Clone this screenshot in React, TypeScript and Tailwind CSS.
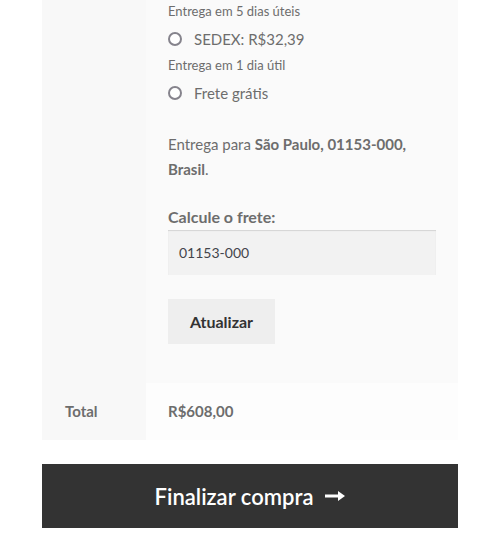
const font = { fontFamily: '"Lato", "Liberation Sans", sans-serif' };

function Radio({ label }: { label: string }) {
  return (
    <label className="flex items-center h-[24px] mt-2">
      <span className="w-[14px] h-[14px] rounded-full border-2 border-[#85838c] bg-white shrink-0" />
      <span className="ml-[12px] text-[15px] leading-[24px]">{label}</span>
    </label>
  );
}

function Method({ note, label, first }: { note: string; label: string; first?: boolean }) {
  return (
    <li className={first ? 'pt-[3px]' : 'mt-[6px]'}>
      <p className="text-[13px] leading-[16px]">{note}</p>
      <Radio label={label} />
    </li>
  );
}

export default function App() {
  return (
    <div className="w-[498px] h-[547px] bg-white pl-[42px] pr-[40px] text-[#6d6d6d] overflow-hidden" style={font}>
      <div className="flex">
        <div className="w-[104px] bg-[#f8f8f8]" />
        <div className="flex-1 bg-[#fafafa] px-[22px] pb-[39px]">
          <ul>
            <Method first note="Entrega em 5 dias úteis" label="SEDEX: R$32,39" />
            <Method note="Entrega em 1 dia útil" label="Frete grátis" />
          </ul>
          <p className="mt-[27px] text-[15px] leading-[25px]">
            Entrega para <strong className="font-bold">São Paulo, 01153-000, Brasil</strong>.
          </p>
          <p className="mt-[22px] mb-[1px] text-[16px] leading-[25px] font-bold">Calcule o frete:</p>
          <div className="h-[45px] bg-[#f2f2f2] shadow-[inset_0_1px_1px_rgba(0,0,0,0.125)] flex items-center px-[11px] text-[14px] text-[#43454b]">
            01153-000
          </div>
          <button className="mt-[24px] w-[107px] h-[45px] bg-[#eeeeee] text-[#333333] font-bold text-[16px]">
            Atualizar
          </button>
        </div>
      </div>
      <div className="flex h-[57px]">
        <div className="w-[104px] bg-[#f8f8f8] pl-[23px] flex items-center font-bold text-[15px]">Total</div>
        <div className="flex-1 bg-[#fdfdfd] pl-[22px] flex items-center font-bold text-[15px]">R$608,00</div>
      </div>
      <button className="mt-[24px] w-full h-[64px] bg-[#333333] text-white flex items-center justify-center gap-[12px] text-[22px] font-semibold">
        Finalizar compra
        <svg width="20" height="10" viewBox="0 0 20 10">
          <rect x="0" y="3.5" width="14" height="3" fill="white" />
          <path d="M13 0 L20 5 L13 10 Z" fill="white" />
        </svg>
      </button>
    </div>
  );
}
